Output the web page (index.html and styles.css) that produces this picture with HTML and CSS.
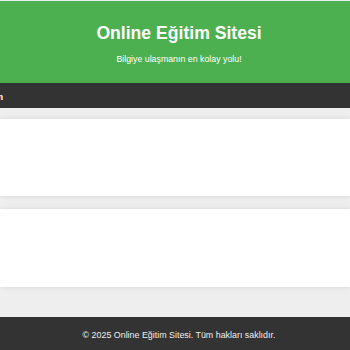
FILE: index.html
```html
<!DOCTYPE html>
<html lang="tr">
<head>
    <meta charset="UTF-8">
    <meta name="viewport" content="width=device-width, initial-scale=1.0">
    <title>Online Eğitim Sitesi</title>
    <link rel="stylesheet" href="styles.css">
</head>
<body>
    <header class="site-header">
        <h1>Online Eğitim Sitesi</h1>
        <p>Bilgiye ulaşmanın en kolay yolu!</p>
    </header>
    <nav class="site-nav">
        <ul>
            <li><a href="#">Ana Sayfa</a></li>
            <li><a href="#">Kurslar</a></li>
            <li><a href="#">İletişim</a></li>
        </ul>
    </nav>
    <main class="content">
        <section class="card"></section>
        <section class="card card-second"></section>
    </main>
    <footer class="site-footer">
        <p>&copy; 2025 Online Eğitim Sitesi. Tüm hakları saklıdır.</p>
    </footer>
</body>
</html>
```

FILE: styles.css
```css
body {
    font-family: "Liberation Sans", Arial, sans-serif;
    background-color: #eeeeee;
    margin: 0;
    padding-top: 1px;
    overflow: hidden;
}
.site-header {
    background-color: #4caf50;
    color: white;
    text-align: center;
    padding: 12px 0 9px 8px;
}
.site-header h1 {
    margin: 10px 0;
    font-size: 17.6px;
    line-height: 20px;
}
.site-header p {
    margin: 11px 0 9px;
    font-size: 8.8px;
    line-height: 11px;
}
.site-nav {
    background-color: #333;
    height: 25px;
    overflow: hidden;
}
.site-nav ul {
    list-style: none;
    display: flex;
    justify-content: flex-end;
    width: 3px;
    margin: 0;
    padding: 9px 0 5px;
    gap: 12px;
    font-size: 8.8px;
    line-height: 11px;
}
.site-nav li {
    flex-shrink: 0;
}
.site-nav a {
    color: white;
    font-weight: bold;
    text-decoration: none;
}
.content {
    padding: 11px 0 30px;
}
.card {
    background-color: white;
    height: 77px;
    margin-bottom: 13px;
    box-shadow: 0 0 5px rgba(0, 0, 0, 0.1);
}
.card-second {
    height: 78px;
    margin-bottom: 0;
}
.site-footer {
    background-color: #333;
    color: #eeeeee;
    text-align: center;
    height: 33px;
    padding-left: 8px;
}
.site-footer p {
    margin: 0;
    padding-top: 13px;
    font-size: 8.9px;
    line-height: 11px;
}
```
